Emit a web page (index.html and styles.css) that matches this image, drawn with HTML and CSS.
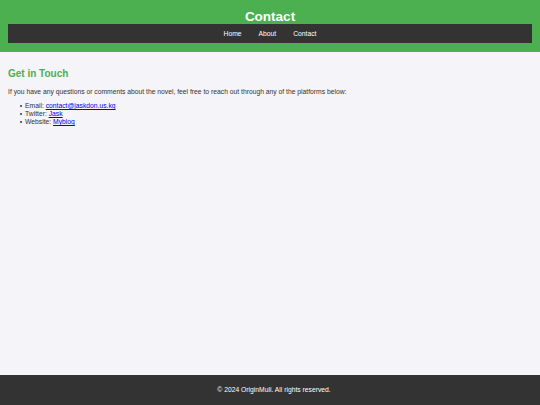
FILE: index.html
```html
<!DOCTYPE html>
<html lang="en">
<head>
<meta charset="utf-8">
<title>Contact</title>
<link rel="stylesheet" href="styles.css">
</head>
<body>
<header class="site-header">
  <h1 class="site-title">Contact</h1>
  <nav class="site-nav">
    <a href="#">Home</a>
    <a href="#">About</a>
    <a href="#">Contact</a>
  </nav>
</header>
<main class="content">
  <h2 class="section-title">Get in Touch</h2>
  <p class="intro">If you have any questions or comments about the novel, feel free to reach out through any of the platforms below:</p>
  <ul class="contact-list">
    <li>Email: <a href="#">contact@jaskdon.us.kg</a></li>
    <li>Twitter: <a href="#">Jask</a></li>
    <li>Website: <a href="#">Myblog</a></li>
  </ul>
</main>
<footer class="site-footer">
  <p>&copy; 2024 OriginMuli. All rights reserved.</p>
</footer>
</body>
</html>
```

FILE: styles.css
```css
html, body {
  margin: 0;
  padding: 0;
}

body {
  font-family: "Liberation Sans", Arial, sans-serif;
  font-size: 6.75px;
  line-height: 1.2;
  color: #333;
  background: #f4f4f9;
  min-height: 100vh;
  display: flex;
  flex-direction: column;
}

.site-header {
  background: #4caf50;
  color: #fff;
  padding: 8px 8px 9px;
  text-align: center;
}

.site-title {
  margin: 0;
  font-size: 13.5px;
  line-height: 16px;
  font-weight: bold;
  position: relative;
  top: 1px;
}

.site-nav {
  background: #333;
  display: flex;
  justify-content: center;
  gap: 17px;
  padding: 5px 0;
  line-height: 9px;
}

.site-nav a {
  color: #fff;
  text-decoration: none;
}

.content {
  flex: 1;
  padding: 8px;
}

.section-title {
  color: #4caf50;
  font-size: 10px;
  line-height: 11.5px;
  margin: 8px 0 8px;
}

.intro {
  margin: 0 0 6.75px;
  line-height: 8px;
}

.contact-list {
  list-style: none;
  margin: 6.75px 0;
  padding-left: 17px;
  line-height: 8px;
}

.contact-list li {
  display: flex;
  align-items: center;
}

.contact-list li::before {
  content: "";
  width: 2px;
  height: 2px;
  border-radius: 50%;
  background: #333;
  margin-left: -5px;
  margin-right: 3px;
}

.contact-list li a {
  margin-left: 0.28em;
}

.contact-list a {
  color: #0000ee;
}

.site-footer {
  background: #333;
  color: #fff;
  text-align: center;
  height: 30px;
  padding-left: 8px;
  display: flex;
  align-items: center;
  justify-content: center;
}

.site-footer p {
  margin: 0;
  line-height: 8px;
}
```
